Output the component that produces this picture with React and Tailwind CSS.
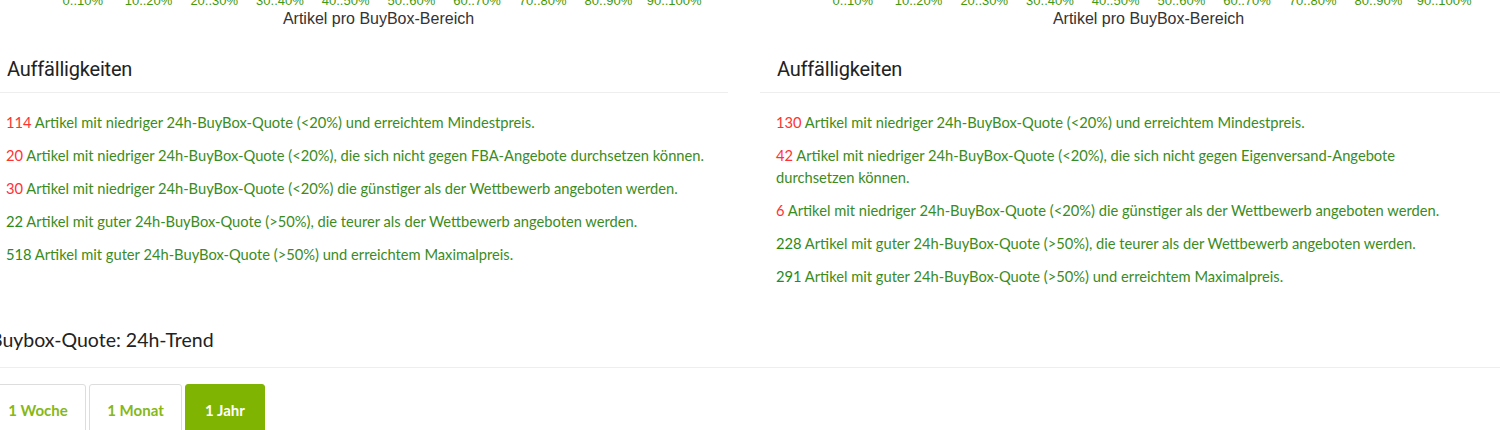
const axis = ['0..10%', '10..20%', '20..30%', '30..40%', '40..50%', '50..60%', '60..70%', '70..80%', '80..90%', '90..100%'];

const leftRows = [
    { n: 114, bad: true, text: 'Artikel mit niedriger 24h-BuyBox-Quote (<20%) und erreichtem Mindestpreis.' },
    { n: 20, bad: true, text: 'Artikel mit niedriger 24h-BuyBox-Quote (<20%), die sich nicht gegen FBA-Angebote durchsetzen können.' },
    { n: 30, bad: true, text: 'Artikel mit niedriger 24h-BuyBox-Quote (<20%) die günstiger als der Wettbewerb angeboten werden.' },
    { n: 22, bad: false, text: 'Artikel mit guter 24h-BuyBox-Quote (>50%), die teurer als der Wettbewerb angeboten werden.' },
    { n: 518, bad: false, text: 'Artikel mit guter 24h-BuyBox-Quote (>50%) und erreichtem Maximalpreis.' },
];

const rightRows = [
    { n: 130, bad: true, text: 'Artikel mit niedriger 24h-BuyBox-Quote (<20%) und erreichtem Mindestpreis.' },
    { n: 42, bad: true, text: 'Artikel mit niedriger 24h-BuyBox-Quote (<20%), die sich nicht gegen Eigenversand-Angebote durchsetzen können.' },
    { n: 6, bad: true, text: 'Artikel mit niedriger 24h-BuyBox-Quote (<20%) die günstiger als der Wettbewerb angeboten werden.' },
    { n: 228, bad: false, text: 'Artikel mit guter 24h-BuyBox-Quote (>50%), die teurer als der Wettbewerb angeboten werden.' },
    { n: 291, bad: false, text: 'Artikel mit guter 24h-BuyBox-Quote (>50%) und erreichtem Maximalpreis.' },
];

const ChartFoot = ({ offset }) => (
    <div className={`h-[44px] flex flex-col ${offset} w-[657px] font-['Liberation_Sans',Arial,sans-serif]`}>
        <div className="grid grid-cols-10 -mt-[6px] text-[13px] leading-[13px] text-[#3f9a0e] text-center">
            {axis.map((a) => (
                <span key={a}>{a}</span>
            ))}
        </div>
        <div className="mt-[3px] text-center text-[16px] leading-[17px] text-[#333]">Artikel pro BuyBox-Bereich</div>
    </div>
);

const Panel = ({ rows, chartOffset, headPad, listPad, listWidth }) => (
    <div>
        <ChartFoot offset={chartOffset} />
        <div className={`${headPad} pt-[11px] pb-[9px] border-b border-[#eeeeee]`}>
            <h3 className="font-['Roboto',sans-serif] text-[20px] leading-[28px] text-[#222] tracking-[-0.2px]">Auffälligkeiten</h3>
        </div>
        <div className={`${listPad} ${listWidth} pt-[18px] font-['Lato',sans-serif] text-[14.7px] leading-[22px] text-[#3a8c22]`}>
            {rows.map((r) => (
                <p key={r.n} className="mb-[11px]">
                    <span className={r.bad ? 'text-[#ff3333]' : 'text-[#2a8a1a]'}>{r.n}</span> {r.text}
                </p>
            ))}
        </div>
    </div>
);

export default function App() {
    return (
        <div className="w-[1500px] h-[430px] overflow-hidden bg-white">
            <div className="flex h-[300px]">
                <div className="w-[728px] shrink-0">
                    <Panel rows={leftRows} chartOffset="ml-[50px]" headPad="pl-[7px]" listPad="pl-[6px]" listWidth="w-[728px]" />
                </div>
                <div className="ml-[32px] flex-1">
                    <Panel rows={rightRows} chartOffset="ml-[60px]" headPad="pl-[17px]" listPad="pl-[16px]" listWidth="w-[700px]" />
                </div>
            </div>

            {/* Trend section */}
            <div className="-ml-[10px]">
                <div className="pt-[27px] pb-[14px] border-b border-[#eeeeee]">
                    <h3 className="font-['Lato',sans-serif] text-[19.5px] leading-[26px] text-[#222]">Buybox-Quote: 24h-Trend</h3>
                </div>
                <div className="mt-[16px] flex gap-[3px] font-['Lato',sans-serif] text-[15px] font-bold">
                    <button className="w-[96px] h-[52px] border border-[#dddddd] rounded-t-[3px] bg-white text-[#86b817]">1 Woche</button>
                    <button className="w-[93px] h-[52px] border border-[#dddddd] rounded-t-[3px] bg-white text-[#86b817]">1 Monat</button>
                    <button className="w-[80px] h-[52px] border border-[#7fb502] rounded-t-[3px] bg-[#7fb502] text-white">1 Jahr</button>
                </div>
            </div>
        </div>
    );
}
